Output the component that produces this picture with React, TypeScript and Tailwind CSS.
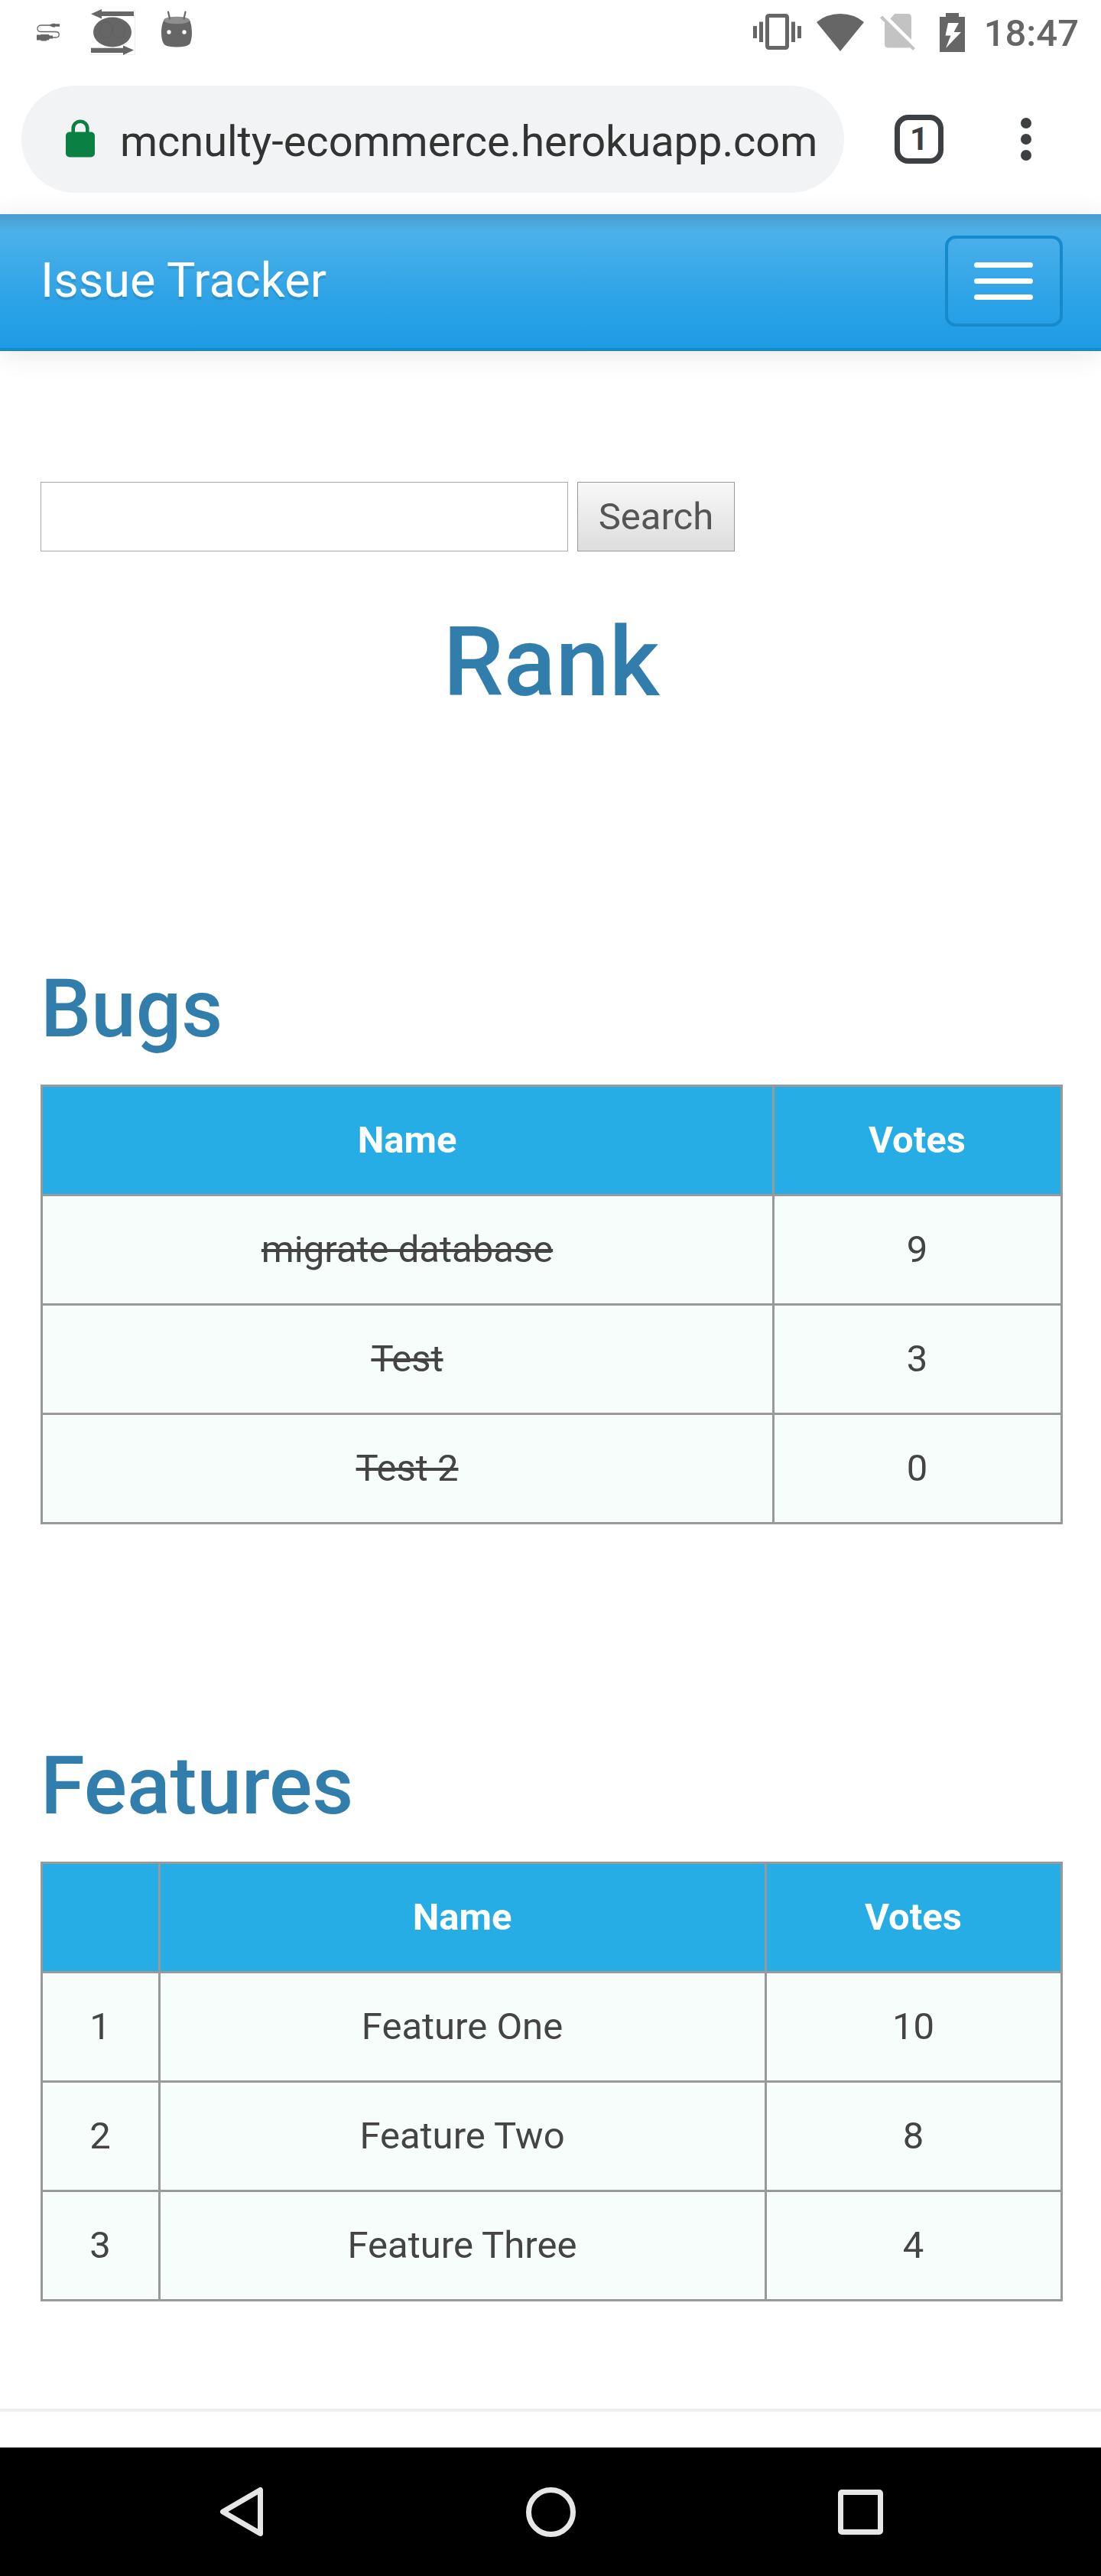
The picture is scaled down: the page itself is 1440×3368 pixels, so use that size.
import React from "react";

function CableIcon() {
  return (
    <svg className="ml-12 h-6 w-[30px] shrink-0" viewBox="0 0 30 24" fill="none">
      <path d="M17 3H5.500C-.5 3-.5 11.500 5.500 11.500H24.500C31 11.500 30.500 19 25 19H20" stroke="#666" strokeWidth="1.300" />
      <path d="M17 2.300 21 .8H24V1.200H30V4.800H24V5.500H21L17 3.800ZM0 15.500H5.500V15H15.500L17 16.500H21V20.500H17L15.500 22.500H13V23.500H5.500V22.500H0Z" fill="#666" />
    </svg>
  );
}

function SyncIcon() {
  return (
    <svg className="ml-[39px] h-[60px] w-[60px] shrink-0" viewBox="0 0 60 60" fill="none">
      <path d="M59.500 0V59.500H0" stroke="#eee" />
      <path d="M2 6.300 16 0V3H58V9H16V12.500Z M58 53.500 44 60V57H2V50.800H44V47.500Z" fill="#666" />
      <ellipse cx="30" cy="30" rx="25" ry="19.500" fill="#666" />
      <g stroke="#606060">
        <ellipse cx="22" cy="27" rx="8" ry="10.500" />
        <ellipse cx="38.500" cy="27" rx="8" ry="10.500" />
      </g>
    </svg>
  );
}

function AndroidIcon() {
  return (
    <svg className="ml-[34px] h-12 w-10 shrink-0" viewBox="0 0 40 48">
      <path d="M3 13Q0 19 0 28.500T3 43Q4 45 9 46.500Q20 48.500 31 46.500Q36 45 37.500 43Q40 37 40 28.500T37.500 13Z" fill="#666" />
      <ellipse cx="20" cy="12.500" rx="17" ry="4.800" fill="#8e8e8e" />
      <path d="M9 1.500 11 10.500M31.500 1.500 29.500 10.500" stroke="#666" strokeWidth="2.200" strokeLinecap="round" />
      <circle cx="10" cy="28" r="2.700" fill="#fff" />
      <circle cx="30" cy="28" r="2.700" fill="#fff" />
    </svg>
  );
}

function VibrateIcon() {
  return (
    <svg className="h-12 w-16 shrink-0" viewBox="0 0 64 48">
      <path d="M0 16H5V32H0ZM8 10.500H13V37H8ZM50 10.500H55V37H50ZM58 16H63V32H58Z" fill="#666" />
      <rect x="18.500" y="2.500" width="26" height="42" rx="2" fill="none" stroke="#666" strokeWidth="5" />
    </svg>
  );
}

function WifiIcon() {
  return (
    <svg className="ml-[19px] h-[49px] w-[62px] shrink-0" viewBox="0 0 62 49">
      <path d="M0 11Q13 0 31 0T62 11L31 49Z" fill="#666" />
    </svg>
  );
}

function NoSimIcon() {
  return (
    <svg className="ml-[21px] h-12 w-[46px] shrink-0" viewBox="0 0 46 48">
      <path d="M19 0H36Q41 0 41 5V34L13.500 6.500ZM6 9.500 40 43.500Q39 44.500 36 44.500H11Q6 44.500 6 39.500Z" fill="#c3c3c3" />
      <path d="M1.500 4 44.500 46.500" stroke="#c3c3c3" strokeWidth="4" />
    </svg>
  );
}

function BatteryIcon() {
  return (
    <svg className="ml-8 h-[51px] w-[33px] shrink-0" viewBox="0 0 33 51">
      <path d="M8 0H25V5H33V51H0V5H8Z" fill="#666" />
      <path d="M11 13H25L18.500 25H28L8 46L14.500 29.500H7.500Z" fill="#fff" />
    </svg>
  );
}

function StatusBar() {
  return (
    <div className="flex h-[84px] items-center bg-white">
      <CableIcon />
      <SyncIcon />
      <div className="-mt-[8px]">
        <AndroidIcon />
      </div>
      <div className="ml-auto flex items-center pr-[29px]">
        <VibrateIcon />
        <WifiIcon />
        <NoSimIcon />
        <BatteryIcon />
        <span className="ml-[25px] pt-[4px] text-[49px] leading-[80px] font-medium text-[#666]">18:47</span>
      </div>
    </div>
  );
}

function AddressBar() {
  return (
    <div className="flex h-[196px] items-center bg-white pl-7">
      <div className="flex h-[140px] w-[1076px] items-center rounded-full bg-[#f1f3f4] pl-[58px]">
        <svg className="-mt-[2px] h-[50px] w-[38px]" viewBox="0 0 38 50">
          <rect y="16.500" width="38" height="33" rx="5" fill="#0b8043" />
          <path d="M9.700 18V12A9.300 9.300 0 0 1 28.300 12V18" fill="none" stroke="#0b8043" strokeWidth="4.600" />
        </svg>
        <span className="ml-[33px] pt-[5px] text-[56px] leading-[66px] tracking-[-0.05px] whitespace-nowrap text-[#333]">
          mcnulty-ecommerce.herokuapp.com
        </span>
      </div>
      <div className="ml-[66px] flex h-16 w-16 items-center justify-center rounded-[18px] border-[7px] border-[#3c4043] text-[42px] leading-none font-bold text-[#3c4043]">
        1
      </div>
      <div className="ml-[101px] flex flex-col gap-[7px]">
        <i className="size-[14px] rounded-full bg-[#3c4043]" />
        <i className="size-[14px] rounded-full bg-[#3c4043]" />
        <i className="size-[14px] rounded-full bg-[#3c4043]" />
      </div>
    </div>
  );
}

function Navbar() {
  return (
    <nav className="relative flex h-[179px] items-center justify-between border-b-4 border-[#178acc] bg-[linear-gradient(#54b4eb,#2fa4e7_60%,#1d9ce5)] pr-[50px] pl-[53px] shadow-[0_3.5px_35px_rgba(0,0,0,0.1)]">
      <div className="absolute inset-x-0 top-0 h-6 bg-linear-to-b from-black/13 to-transparent" />
      <span className="-mt-[2px] text-[63px] leading-[70px] tracking-[0.05px] text-white [text-shadow:0_3.5px_0_rgba(0,0,0,0.1)]">Issue Tracker</span>
      <button className="flex h-[119px] w-[154px] flex-col items-center justify-center gap-[14px] rounded-[14px] border-4 border-[#178acc] pr-px">
        <i className="h-[7px] w-[77px] rounded-[3.5px] bg-white" />
        <i className="h-[7px] w-[77px] rounded-[3.5px] bg-white" />
        <i className="h-[7px] w-[77px] rounded-[3.5px] bg-white" />
      </button>
    </nav>
  );
}

const th = "h-[140px] bg-[#27ade5] p-0 pr-px text-center font-bold text-white";
const td = "h-[140px] bg-[#f7fdfb] p-0 pr-px text-center text-[#444]";
const table = "w-[1337px] table-fixed border-separate border-spacing-[3px] bg-[#999] text-[49px] leading-[70px]";
const heading = "text-[105px] leading-[116px] font-medium text-[#317eac]";

const bugs = [
  { name: "migrate database", votes: 9 },
  { name: "Test", votes: 3 },
  { name: "Test 2", votes: 0 },
];

const features = [
  { name: "Feature One", votes: 10 },
  { name: "Feature Two", votes: 8 },
  { name: "Feature Three", votes: 4 },
];

export default function App() {
  return (
    <div className="flex h-[3368px] w-[1440px] flex-col overflow-hidden bg-white font-['Roboto',sans-serif]">
      <StatusBar />
      <AddressBar />
      <Navbar />
      <main className="px-[53px] pt-[171px]">
        <form className="flex gap-3">
          <input className="h-[91px] w-[690px] border border-[#a9a9a9] bg-white" />
          <button type="button" className="h-[91px] w-[206px] border border-[#999] bg-linear-to-b from-[#f8f8f8] to-[#dddddd] text-[49px] leading-[89px] text-[#555]">
            Search
          </button>
        </form>
        <h1 className="mt-[76px] pl-[2px] text-center text-[126px] leading-[138px] font-medium text-[#317eac]">Rank</h1>
        <h2 className={`mt-[327px] ${heading}`}>Bugs</h2>
        <table className={`mt-[40px] ${table}`}>
          <thead>
            <tr>
              <th className={`w-[954px] ${th}`}>Name</th>
              <th className={`w-[374px] ${th}`}>Votes</th>
            </tr>
          </thead>
          <tbody>
            {bugs.map((b) => (
              <tr key={b.name}>
                <td className={`line-through ${td}`}>{b.name}</td>
                <td className={td}>{b.votes}</td>
              </tr>
            ))}
          </tbody>
        </table>
        <h2 className={`mt-[285px] ${heading}`}>Features</h2>
        <table className={`mt-[40px] ${table}`}>
          <thead>
            <tr>
              <th className={`w-[151px] ${th}`} />
              <th className={`w-[790px] ${th}`}>Name</th>
              <th className={`w-[384px] ${th}`}>Votes</th>
            </tr>
          </thead>
          <tbody>
            {features.map((f, i) => (
              <tr key={f.name}>
                <td className={td}>{i + 1}</td>
                <td className={td}>{f.name}</td>
                <td className={td}>{f.votes}</td>
              </tr>
            ))}
          </tbody>
        </table>
      </main>
      <hr className="mt-[140px] h-1 border-0 bg-[#eee]" />
      <footer className="mt-[47px] flex h-[168px] items-center bg-black pl-[287px]">
        <svg className="h-[66px] w-[58px]" viewBox="0 0 58 66" fill="none">
          <path d="M53.500 4.500V61.500L4.500 33Z" stroke="#e6e6e6" strokeWidth="7" strokeLinejoin="round" />
        </svg>
        <i className="ml-[343px] size-[65px] rounded-full border-[7px] border-[#e6e6e6]" />
        <i className="ml-[343px] size-[59px] rounded-[5px] border-[7px] border-[#e6e6e6]" />
      </footer>
    </div>
  );
}
